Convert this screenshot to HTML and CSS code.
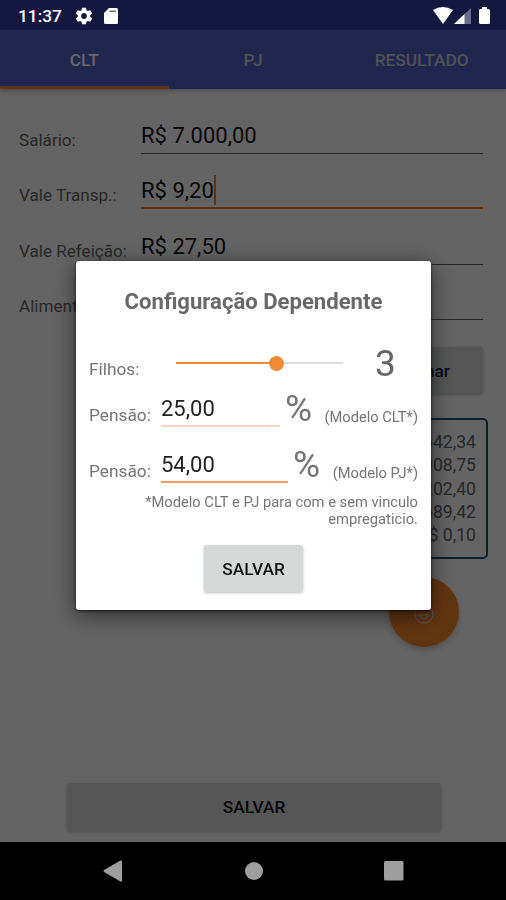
FILE: index.html
```html
<!DOCTYPE html>
<html lang="pt-BR">
<head>
  <meta charset="UTF-8">
  <meta name="viewport" content="width=device-width, initial-scale=1.0">
  <title>Configuração Dependente</title>
  <link rel="stylesheet" href="styles.css">
</head>
<body>
  <div class="screen">
    <header class="status-bar">
      <span class="clock">11:37</span>
      <svg class="gear" width="20" height="20" viewBox="0 0 24 24"><path fill="#fff" d="M19.43 12.98c.04-.32.07-.64.07-.98s-.03-.66-.07-.98l2.11-1.65c.19-.15.24-.42.12-.64l-2-3.46c-.12-.22-.39-.3-.61-.22l-2.49 1c-.52-.4-1.08-.73-1.69-.98l-.38-2.65C14.46 2.18 14.25 2 14 2h-4c-.25 0-.46.18-.49.42l-.38 2.65c-.61.25-1.17.59-1.69.98l-2.49-1c-.23-.09-.49 0-.61.22l-2 3.46c-.13.22-.07.49.12.64l2.11 1.65c-.04.32-.07.65-.07.98s.03.66.07.98l-2.11 1.65c-.19.15-.24.42-.12.64l2 3.46c.12.22.39.3.61.22l2.49-1c.52.4 1.08.73 1.69.98l.38 2.65c.03.24.24.42.49.42h4c.25 0 .46-.18.49-.42l.38-2.65c.61-.25 1.17-.59 1.69-.98l2.49 1c.23.09.49 0 .61-.22l2-3.46c.12-.22.07-.49-.12-.64l-2.11-1.65zM12 15.5c-1.93 0-3.5-1.57-3.5-3.5s1.57-3.5 3.5-3.5 3.5 1.57 3.5 3.5-1.57 3.5-3.5 3.5z"/></svg>
      <svg class="sd" width="14" height="16" viewBox="0 0 14 16"><path fill="#fff" d="M5 0h7.500q1.500 0 1.500 1.500v13q0 1.500-1.500 1.500h-11Q0 16 0 14.500V5z"/><path fill="#696b8b" d="M5.500 2.500h6.500v1.500H5.500z"/></svg>
      <div class="signals">
        <svg width="20" height="17" viewBox="0 0 20 17"><path fill="#fff" d="M0 3Q10-3 20 3L10 17z"/></svg>
        <svg width="17" height="16" viewBox="0 0 17 16"><path fill="#696b8b" d="M17 0v16H0z"/><path fill="#fff" d="M10.500 6v10H0z"/></svg>
        <svg class="battery" width="11" height="17" viewBox="0 0 11 17"><path fill="#fff" d="M3 0h5v2h1.500Q11 2 11 3.500v12q0 1.500-1.500 1.500h-8Q0 17 0 15.500v-12Q0 2 1.500 2H3z"/></svg>
      </div>
    </header>

    <nav class="tabs">
      <div class="tab active"><span>CLT</span></div>
      <div class="tab"><span>PJ</span></div>
      <div class="tab"><span>RESULTADO</span></div>
    </nav>

    <main class="content">
      <div class="row">
        <label>Salário:</label>
        <div class="field"><span>R$ 7.000,00</span></div>
      </div>
      <div class="row">
        <label>Vale Transp.:</label>
        <div class="field focused"><span>R$ 9,20</span><i class="caret"></i></div>
      </div>
      <div class="row">
        <label>Vale Refeição:</label>
        <div class="field"><span>R$ 27,50</span></div>
      </div>
      <div class="row">
        <label>Alimentação:</label>
        <div class="field last"></div>
      </div>
      <button class="button add">Adicionar</button>
      <div class="summary">
        <p>R$ 642,34</p>
        <p>R$ 908,75</p>
        <p>R$ 202,40</p>
        <p>R$ 689,42</p>
        <p>R$ 0,10</p>
      </div>
      <div class="fab">
        <svg width="22" height="22" viewBox="0 0 22 22" fill="none" stroke="#ddd" stroke-width="1"><circle cx="11" cy="11" r="9"/><path d="M5.500 12q5.500 7 11 0z"/></svg>
      </div>
      <button class="button save">SALVAR</button>
    </main>

    <footer class="nav-bar">
      <svg width="20" height="22" viewBox="0 0 20 22"><path fill="#9e9e9e" d="M17.500.5Q19 0 19 1.500v19q0 1.500-1.500 1L1 12Q0 11 1 10z"/></svg>
      <svg width="20" height="20" viewBox="0 0 20 20"><circle cx="10" cy="10" r="9" fill="#9e9e9e"/></svg>
      <svg width="20" height="20" viewBox="0 0 20 20"><rect width="19.500" height="19.500" rx="1.500" fill="#9e9e9e"/></svg>
    </footer>
  </div>

  <div class="overlay">
    <div class="dialog">
      <h1>Configuração Dependente</h1>
      <div class="children">
        <label>Filhos:</label>
        <div class="slider"><div class="thumb"></div></div>
        <span class="count">3</span>
      </div>
      <div class="pension">
        <label>Pensão:</label>
        <div class="input clt"><span>25,00</span></div>
        <span class="percent">%</span>
        <span class="model">(Modelo CLT*)</span>
      </div>
      <div class="pension">
        <label>Pensão:</label>
        <div class="input pj"><span>54,00</span></div>
        <span class="percent">%</span>
        <span class="model">(Modelo PJ*)</span>
      </div>
      <p class="note">*Modelo CLT e PJ para com e sem vinculo<br>empregaticio.</p>
      <button class="button confirm">SALVAR</button>
    </div>
  </div>
</body>
</html>
```
FILE: styles.css
```css
* {
  box-sizing: border-box;
}
body {
  margin: 0;
  overflow: hidden;
  font-family: Roboto, "Liberation Sans", sans-serif;
  font-size: 17.3px;
  color: #666;
}
svg {
  display: block;
}
.screen {
  height: 900px;
  display: flex;
  flex-direction: column;
  background: #fafafa;
}
.status-bar {
  position: relative;
  z-index: 20;
  height: 30px;
  flex: none;
  display: flex;
  align-items: center;
  padding: 1px 16px 0 18px;
  background: #14183f;
  color: #fff;
}
.clock {
  width: 56px;
  font-weight: 500;
  font-size: 17.3px;
}
.sd {
  margin-left: 10px;
}
.signals {
  margin-left: auto;
  display: flex;
  align-items: center;
  gap: 1px;
}
.battery {
  margin-left: 7px;
}
.tabs {
  height: 59px;
  flex: none;
  display: flex;
  background: #5160c0;
  box-shadow: 0 2px 4px rgba(0, 0, 0, 0.25);
}
.tab {
  flex: 1;
  display: flex;
  align-items: center;
  justify-content: center;
  border-bottom: 3px solid transparent;
  padding-top: 3px;
  font-weight: 500;
  color: #c6c9dc;
}
.tab.active {
  color: #fff;
  border-color: #f08a30;
}
.content {
  flex: 1;
  display: flex;
  flex-direction: column;
  padding: 9px 23px 0 19px;
}
.row {
  height: 55.5px;
  display: flex;
  align-items: flex-end;
}
.row label {
  width: 122px;
  flex: none;
  padding-bottom: 4px;
  font-size: 17.1px;
  white-space: nowrap;
}
.field {
  flex: 1;
  height: 34px;
  display: flex;
  align-items: flex-start;
  border-bottom: 1px solid #666;
  font-size: 22px;
  line-height: 34px;
  color: #111;
}
.field span {
  margin-top: -1px;
}
.field.focused {
  border-bottom: 2px solid #ef7d18;
}
.caret {
  width: 2px;
  height: 30px;
  background: #ef7d18;
}
.button {
  border: none;
  border-radius: 3px;
  background: #d6d7d7;
  box-shadow: 0 1px 3px rgba(0, 0, 0, 0.25);
  font-family: inherit;
  font-size: 17.3px;
  font-weight: 500;
  color: #111;
}
.add {
  align-self: flex-end;
  width: 140px;
  height: 47px;
  margin-top: 27px;
}
.summary {
  height: 141px;
  margin: 24px -5px 0 90px;
  padding: 11px 10px 0 0;
  border: 2px solid #23506e;
  border-radius: 5px;
  text-align: right;
  font-size: 17.6px;
  line-height: 23.3px;
}
.summary p {
  margin: 0;
}
.fab {
  align-self: flex-end;
  width: 70px;
  height: 70px;
  margin: 18px 24px 0 0;
  padding: 26px 0 0 24px;
  border-radius: 50%;
  background: #f5842b;
  box-shadow: 0 3px 6px rgba(0, 0, 0, 0.2);
}
.save {
  width: 374px;
  height: 48px;
  margin: auto 0 11px 48px;
}
.nav-bar {
  position: relative;
  z-index: 20;
  height: 58px;
  flex: none;
  display: flex;
  align-items: center;
  justify-content: space-between;
  padding: 0 102px 0 103px;
  background: #000;
}
.overlay {
  position: fixed;
  inset: 0;
  z-index: 10;
  background: rgba(0, 0, 0, 0.6);
  padding: 261px 75px 0 76px;
}
.dialog {
  height: 349px;
  display: flex;
  flex-direction: column;
  padding: 0 13px;
  border-radius: 3px;
  background: #fff;
  box-shadow: 0 5px 22px rgba(0, 0, 0, 0.6), 0 1px 3px rgba(0, 0, 0, 0.7);
  color: #757575;
}
.dialog h1 {
  margin: 26px 0 0;
  font-size: 22.1px;
  line-height: 28px;
  font-weight: 700;
  text-align: center;
  color: #686868;
}
.children {
  height: 66px;
  display: flex;
  align-items: flex-end;
}
.children label {
  width: 87px;
  padding-bottom: 2px;
}
.slider {
  width: 167px;
  height: 2px;
  margin-bottom: 17px;
  background: linear-gradient(to right, #f08a35 60%, #ddd 60%);
}
.thumb {
  width: 15px;
  height: 15px;
  margin: -6px 0 0 93px;
  border-radius: 50%;
  background: #f08a35;
}
.count {
  margin-left: 32px;
  font-size: 37px;
  line-height: 34px;
  color: #666;
}
.pension {
  height: 55.5px;
  display: flex;
  align-items: flex-end;
}
.children + .pension {
  height: 46px;
}
.pension label {
  width: 72px;
  padding-bottom: 2px;
}
.input {
  height: 31px;
  font-size: 22px;
  line-height: 26px;
  color: #222;
}
.clt {
  width: 119px;
  border-bottom: 2px solid #fbd3c3;
}
.pj {
  width: 127px;
  border-bottom: 2px solid #f49a66;
}
.percent {
  margin-left: 5px;
  font-size: 37px;
  line-height: 37px;
}
.model {
  margin-left: auto;
  padding-bottom: 1px;
  font-size: 14.7px;
}
.note {
  margin: 11px 0 0;
  font-size: 14.7px;
  line-height: 17.3px;
  text-align: right;
}
.confirm {
  align-self: center;
  width: 99px;
  height: 47px;
  margin-top: 17px;
  padding: 0;
}
```
